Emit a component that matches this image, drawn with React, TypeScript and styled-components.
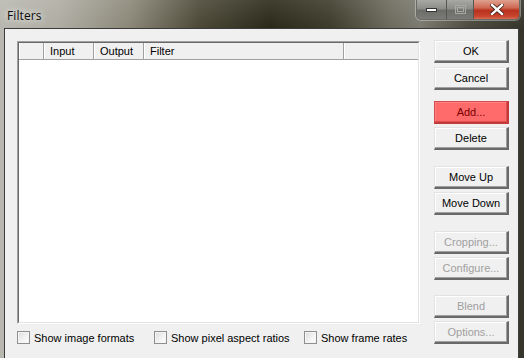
import React from "react";
import styled, { createGlobalStyle } from "styled-components";

const Global = createGlobalStyle`
  html, body { margin: 0; padding: 0; background: #3a3828; }
  body { width: 524px; height: 358px; overflow: hidden; font-family: "Liberation Sans", Arial, sans-serif; }
`;

const Frame = styled.div`
  width: 524px;
  height: 358px;
  box-sizing: border-box;
  display: flex;
  flex-direction: column;
  padding: 0 5px 0 4px;
  background:
    linear-gradient(180deg, rgba(255,255,255,0.10) 0px, rgba(255,255,255,0) 28px),
    linear-gradient(90deg, #b9b8b0 0px, #aeaca2 60px, #8a8778 130px, #4a4736 200px, #2a2919 270px, #3d3b2b 330px, #6c6a5c 390px, #7b7a70 420px, #4b4a3e 470px, #35342a 524px);
`;

const TitleBar = styled.div`
  height: 28px;
  display: flex;
  align-items: flex-start;
  justify-content: space-between;
`;

const Title = styled.div`
  margin: 7px 0 0 3px;
  font-family: "Open Sans", "Noto Sans", sans-serif;
  font-size: 12px;
  color: #0a0a0a;
  text-shadow: 0 0 6px rgba(255,255,255,0.9), 0 0 10px rgba(255,255,255,0.6);
  letter-spacing: 0.1px;
`;

const Caption = styled.div`
  display: flex;
  margin-right: -1px;
  height: 19px;
  border: 1px solid #6a6a66;
  border-top: none;
  border-radius: 0 0 5px 5px;
  overflow: hidden;
  box-shadow: 0 0 0 1px rgba(255,255,255,0.35);
`;

const CapBtn = styled.div<{ $w: number; $red?: boolean }>`
  width: ${(p) => p.$w}px;
  display: flex;
  align-items: center;
  justify-content: center;
  border-left: ${(p) => (p.$red ? "1px solid #5a2a22" : "none")};
  background: ${(p) =>
    p.$red
      ? "linear-gradient(180deg, #e0a090 0%, #cf6a55 40%, #b8321e 55%, #c8442c 85%, #d86a50 100%)"
      : "linear-gradient(180deg, #a8a8a4 0%, #8c8c88 45%, #6c6c68 55%, #7a7a76 100%)"};
  & + & { border-left: 1px solid #555552; }
`;

const Client = styled.div`
  flex: 1;
  background: #f0f0f0;
  border: 1px solid #3c3c3c;
  border-bottom: none;
  display: flex;
  padding: 11px 9px 0 12px;
  box-sizing: border-box;
`;

const LeftCol = styled.div`
  width: 403px;
  display: flex;
  flex-direction: column;
`;

const List = styled.div`
  margin-top: 1px;
  height: 283px;
  box-sizing: border-box;
  border-top: 1px solid #a0a0a0;
  border-left: 1px solid #a0a0a0;
  border-right: 1px solid #fff;
  border-bottom: 1px solid #fff;
  background: #fff;
  display: flex;
  flex-direction: column;
`;

const ListInner = styled.div`
  flex: 1;
  border-top: 1px solid #696969;
  border-left: 1px solid #696969;
  border-right: 1px solid #e3e3e3;
  border-bottom: 1px solid #e3e3e3;
  background: #fff;
`;

const Header = styled.div`
  display: flex;
  height: 16px;
  background: #f0f0f0;
  border-bottom: 1px solid #a0a0a0;
`;

const Col = styled.div<{ $w?: number }>`
  ${(p) => (p.$w ? `width: ${p.$w}px;` : "flex: 1;")}
  box-sizing: border-box;
  padding-left: 6px;
  font-size: 11px;
  line-height: 16px;
  color: #000;
  border-right: 1px solid #a0a0a0;
  box-shadow: inset 1px 0 0 #fff;
  &:last-child { border-right: none; }
`;

const Checks = styled.div`
  display: flex;
  align-items: center;
  margin-top: 7px;
`;

const CheckLabel = styled.label<{ $w: number }>`
  width: ${(p) => p.$w}px;
  display: flex;
  align-items: center;
  font-size: 11px;
  color: #000;
`;

const Box = styled.span`
  width: 13px;
  height: 13px;
  box-sizing: border-box;
  border: 1px solid #8e8f8f;
  background: linear-gradient(135deg, #dcdcdc 0%, #f4f4f4 60%, #fff 100%);
  box-shadow: inset 0 0 0 1px #f4f4f4;
  margin-right: 4px;
  flex: none;
`;

const RightCol = styled.div`
  margin-left: 14px;
  display: flex;
  flex-direction: column;
`;

const Btn = styled.div<{ $gap: number; $red?: boolean; $disabled?: boolean }>`
  margin-top: ${(p) => p.$gap}px;
  width: 75px;
  height: 23px;
  box-sizing: border-box;
  display: flex;
  align-items: center;
  justify-content: center;
  font-size: 11px;
  color: ${(p) => (p.$disabled ? "#a0a0a0" : p.$red ? "#7a0000" : "#000")};
  background: ${(p) => (p.$red ? "#ff6a6a" : "#f0f0f0")};
  border-top: 1px solid ${(p) => (p.$red ? "#d44c4c" : "#e3e3e3")};
  border-left: 1px solid ${(p) => (p.$red ? "#d44c4c" : "#e3e3e3")};
  border-right: 2px solid ${(p) => (p.$red ? "#c03a3a" : "#696969")};
  border-bottom: 2px solid ${(p) => (p.$red ? "#c03a3a" : "#696969")};
  box-shadow: inset -1px -1px 0 ${(p) => (p.$red ? "#e05050" : "#a0a0a0")}, inset 1px 1px 0 ${(p) => (p.$red ? "#ff8080" : "#fff")};
`;

const buttons: { label: string; gap: number; red?: boolean; disabled?: boolean }[] = [
  { label: "OK", gap: 0 },
  { label: "Cancel", gap: 4 },
  { label: "Add...", gap: 11, red: true },
  { label: "Delete", gap: 3 },
  { label: "Move Up", gap: 16 },
  { label: "Move Down", gap: 3 },
  { label: "Cropping...", gap: 16, disabled: true },
  { label: "Configure...", gap: 3, disabled: true },
  { label: "Blend", gap: 15, disabled: true },
  { label: "Options...", gap: 3, disabled: true },
];

export default function App() {
  return (
    <>
      <Global />
      <Frame>
        <TitleBar>
          <Title>Filters</Title>
          <Caption>
            <CapBtn $w={29}>
              <svg width="11" height="4"><rect x="0.5" y="0.5" width="10" height="3" fill="#fff" stroke="#333" strokeWidth="1" /></svg>
            </CapBtn>
            <CapBtn $w={26}>
              <svg width="11" height="9"><rect x="0.5" y="0.5" width="10" height="8" fill="none" stroke="#a8a8a4" strokeWidth="1" /><rect x="2.5" y="2.5" width="6" height="4" fill="none" stroke="#a8a8a4" strokeWidth="1" /></svg>
            </CapBtn>
            <CapBtn $w={45} $red>
              <svg width="14" height="11" viewBox="0 0 14 11">
                <path d="M2 1 L12 10 M12 1 L2 10" stroke="#3a1a14" strokeWidth="4" strokeLinecap="square" />
                <path d="M2 1 L12 10 M12 1 L2 10" stroke="#fff" strokeWidth="2.4" strokeLinecap="square" />
              </svg>
            </CapBtn>
          </Caption>
        </TitleBar>
        <Client>
          <LeftCol>
            <List>
              <ListInner>
                <Header>
                  <Col $w={25} />
                  <Col $w={50}>Input</Col>
                  <Col $w={50}>Output</Col>
                  <Col $w={200}>Filter</Col>
                  <Col />
                </Header>
              </ListInner>
            </List>
            <Checks>
              <CheckLabel $w={137}><Box />Show image formats</CheckLabel>
              <CheckLabel $w={150}><Box />Show pixel aspect ratios</CheckLabel>
              <CheckLabel $w={110}><Box />Show frame rates</CheckLabel>
            </Checks>
          </LeftCol>
          <RightCol>
            {buttons.map((b) => (
              <Btn key={b.label} $gap={b.gap} $red={b.red} $disabled={b.disabled}>
                {b.label}
              </Btn>
            ))}
          </RightCol>
        </Client>
      </Frame>
    </>
  );
}
